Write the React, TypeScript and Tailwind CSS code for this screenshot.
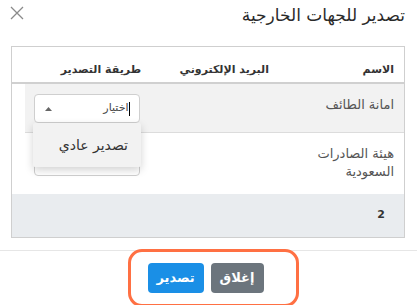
import React from "react";

export default function App() {
  const font = { fontFamily: '"DejaVu Sans", "Noto Sans", sans-serif' };
  return (
    <div dir="rtl" style={font} className="relative w-[417px] h-[305px] overflow-hidden bg-white text-[#333]">
      {/* header */}
      <div className="flex items-center justify-between h-[30px] pr-[12px] pl-[10px]">
        <div className="text-[17px] leading-[20px] text-[#2a2a2a] mt-[0px]">تصدير للجهات الخارجية</div>
        <svg width="14" height="14" viewBox="0 0 14 14" className="mt-[-4px]">
          <path d="M1 1 L13 13 M13 1 L1 13" stroke="#8a8a8a" strokeWidth="1.3" />
        </svg>
      </div>

      {/* table */}
      <div className="mt-[16px] mr-[12px] ml-[11px] border border-[#cfcfcf]">
        <div className="flex h-[37px] border-b-2 border-[#d0d0d0] text-[11px] font-bold text-[#333]">
          <div className="w-[126px] pr-[10px] pt-[15px]">الاسم</div>
          <div className="w-[127px] pr-[9px] pt-[15px]">البريد الإلكتروني</div>
          <div className="flex-1 pr-[10px] pt-[15px]">طريقة التصدير</div>
        </div>

        <div className="flex h-[49px] ml-[13px] bg-[#f2f2f2] border-b border-[#dcdcdc] text-[13px] text-[#555]">
          <div className="w-[126px] pr-[10px] pt-[11px]">امانة الطائف</div>
          <div className="w-[127px]"></div>
          <div className="flex-1 pt-[10px] pr-[11px]">
            <div className="relative w-[106px] h-[29px] bg-white border border-[#cfcfcf] rounded-[4px] flex items-center justify-between pr-[9px] pl-[10px]">
              <div className="flex items-center text-[11px] text-[#444]">
                <span className="inline-block w-[1.5px] h-[14px] bg-black"></span>
                <span>اختيار</span>
              </div>
              <svg width="7" height="4" viewBox="0 0 7 4">
                <path d="M0 4 L3.5 0 L7 4 Z" fill="#666" />
              </svg>
              <div className="absolute z-10 top-[28px] right-[-2px] w-[108px] h-[44px] bg-[#f2f2f2] rounded-[2px] shadow-[0_3px_8px_rgba(0,0,0,0.18)] flex items-center pr-[13px] text-[14px] text-[#333]">
                تصدير عادي
              </div>
            </div>
          </div>
        </div>

        <div className="flex h-[61px] text-[13px] text-[#555]">
          <div className="w-[126px] pr-[10px] pt-[12px] leading-[18px]">
            هيئة الصادرات
            <br />
            السعودية
          </div>
          <div className="w-[127px]"></div>
          <div className="flex-1 pt-[14px] pr-[11px]">
            <div className="w-[106px] h-[29px] bg-white border border-[#cfcfcf] rounded-[4px]"></div>
          </div>
        </div>

        <div className="flex items-center h-[43px] bg-[#e9ecef] pr-[19px] text-[11px] font-bold text-[#333]">2</div>
      </div>

      {/* footer */}
      <div className="mt-[12px] border-t border-[#e6e6e6] flex justify-center pt-[12px] pr-[6px]">
        <div className="flex gap-[7px]">
          <button className="w-[53px] h-[30px] rounded-[4px] bg-[#6c757d] text-white text-[13px] font-bold flex items-center justify-center">إغلاق</button>
          <button className="w-[56px] h-[30px] rounded-[4px] bg-[#1a8fe6] text-white text-[13px] font-bold flex items-center justify-center">تصدير</button>
        </div>
      </div>

      {/* annotation highlight */}
      <div className="absolute left-[128px] top-[249px] w-[171px] h-[58px] border-[3px] border-[#ff7043] rounded-[14px]"></div>
    </div>
  );
}
